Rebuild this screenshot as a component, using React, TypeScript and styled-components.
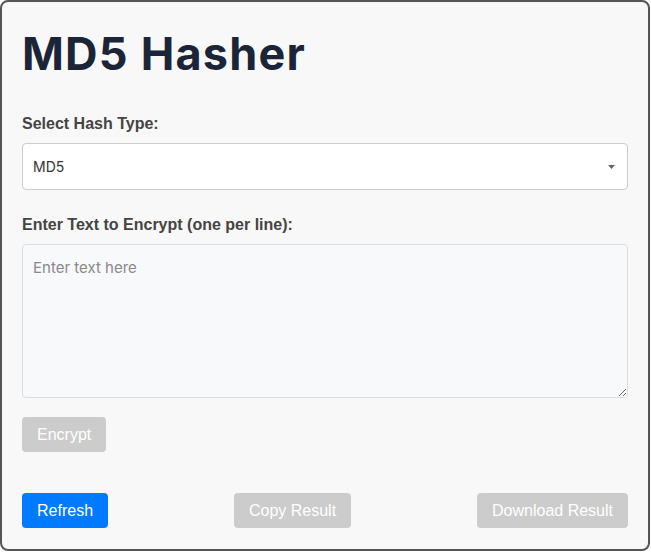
import React from 'react'
import styled, { createGlobalStyle } from 'styled-components'

const GlobalStyle = createGlobalStyle`
  html, body {
    margin: 0;
    padding: 0;
    background: #ffffff;
  }
  * {
    box-sizing: border-box;
  }
`

const Card = styled.div`
  width: 650px;
  height: 551px;
  background: #f8f8f8;
  border: 2px solid #555555;
  border-radius: 8px;
  padding: 0 20px 21px;
  display: flex;
  flex-direction: column;
  font-family: "Liberation Sans", Arial, sans-serif;
`

const Title = styled.h1`
  margin: 25px 0 34px;
  font-family: Inter, "Noto Sans", sans-serif;
  font-size: 45px;
  line-height: 54px;
  font-weight: 700;
  letter-spacing: 1.2px;
  color: #1c2538;
`

const Label = styled.label`
  display: block;
  font-size: 16px;
  font-weight: 700;
  color: #444444;
  margin-bottom: 10px;
`

const SelectWrap = styled.div`
  position: relative;
  margin-bottom: 26px;
`

const Select = styled.select`
  width: 100%;
  height: 47px;
  appearance: none;
  -webkit-appearance: none;
  background: #ffffff;
  border: 1px solid #cccccc;
  border-radius: 4px;
  padding: 0 10px;
  font-family: Inter, "Noto Sans", sans-serif;
  font-size: 14px;
  color: #333333;
  outline: none;
`

const Caret = styled.svg`
  position: absolute;
  right: 13px;
  top: 22px;
  pointer-events: none;
`

const TextArea = styled.textarea`
  display: block;
  width: 100%;
  height: 154px;
  background: #f8f9fb;
  border: 1px solid #dddddd;
  border-radius: 4px;
  padding: 13px 10px;
  font-family: Inter, "Noto Sans", sans-serif;
  font-size: 15px;
  color: #333333;
  resize: vertical;
  outline: none;
  margin: 0 0 19px;

  &::placeholder {
    color: #8a8a8a;
  }
`

const Button = styled.button<{ $primary?: boolean }>`
  height: 35px;
  padding: 0 15px;
  border: none;
  border-radius: 4px;
  font-family: "Liberation Sans", Arial, sans-serif;
  font-size: 16px;
  color: #ffffff;
  background: ${props => props.$primary ? '#007bff' : '#cccccc'};
  cursor: ${props => props.$primary ? 'pointer' : 'default'};
`

const EncryptRow = styled.div`
  display: flex;
`

const BottomRow = styled.div`
  margin-top: auto;
  display: flex;
  justify-content: space-between;
  align-items: center;
`

const App = () => {
  return (
    <>
      <GlobalStyle />
      <Card>
        <Title>MD5 Hasher</Title>
        <Label htmlFor="hashType">Select Hash Type:</Label>
        <SelectWrap>
          <Select id="hashType" defaultValue="md5">
            <option value="md5">MD5</option>
            <option value="sha1">SHA1</option>
            <option value="sha256">SHA256</option>
          </Select>
          <Caret width="7" height="4" viewBox="0 0 7 4">
            <path d="M0 0 L7 0 L3.5 4 Z" fill="#666666" />
          </Caret>
        </SelectWrap>
        <Label htmlFor="inputText">Enter Text to Encrypt (one per line):</Label>
        <TextArea id="inputText" placeholder="Enter text here" />
        <EncryptRow>
          <Button disabled>Encrypt</Button>
        </EncryptRow>
        <BottomRow>
          <Button $primary>Refresh</Button>
          <Button disabled>Copy Result</Button>
          <Button disabled>Download Result</Button>
        </BottomRow>
      </Card>
    </>
  )
}

export default App
